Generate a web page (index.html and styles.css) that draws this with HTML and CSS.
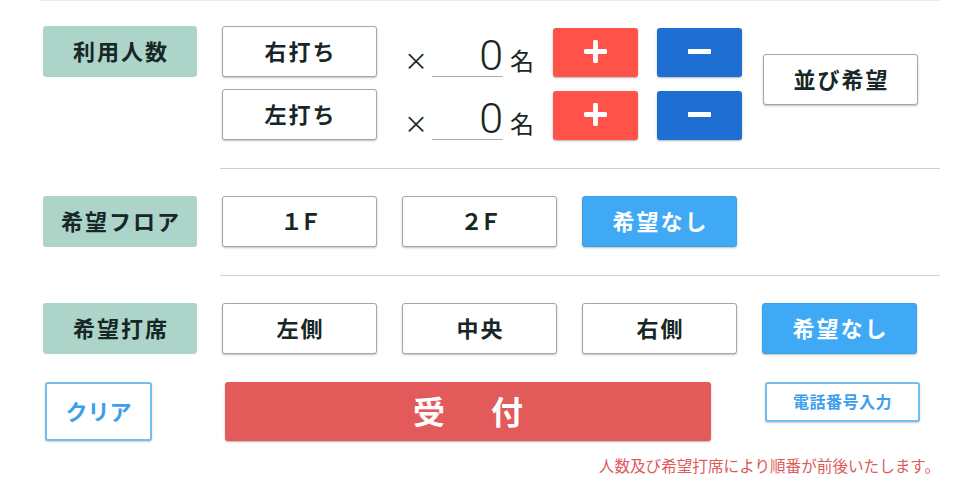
FILE: index.html
```html
<!DOCTYPE html>
<html lang="ja">
<head>
    <meta charset="UTF-8">
    <title>受付</title>
    <link rel="stylesheet" href="styles.css">
</head>
<body>
    <div class="panel">
        <section class="section">
            <div class="section__label">利用人数</div>
            <div class="count">
                <div class="count__row">
                    <button class="choice" type="button">右打ち</button>
                    <div class="count__field">
                        <span class="count__times">×</span>
                        <span class="count__value">0</span>
                        <span class="count__unit">名</span>
                    </div>
                    <button class="step step--plus" type="button">
                        <svg viewBox="0 0 24 24"><path d="M2 12H22M12 2V22"/></svg>
                    </button>
                    <button class="step step--minus" type="button">
                        <svg viewBox="0 0 24 24"><path d="M1 12H23"/></svg>
                    </button>
                </div>
                <div class="count__row">
                    <button class="choice" type="button">左打ち</button>
                    <div class="count__field">
                        <span class="count__times">×</span>
                        <span class="count__value">0</span>
                        <span class="count__unit">名</span>
                    </div>
                    <button class="step step--plus" type="button">
                        <svg viewBox="0 0 24 24"><path d="M2 12H22M12 2V22"/></svg>
                    </button>
                    <button class="step step--minus" type="button">
                        <svg viewBox="0 0 24 24"><path d="M1 12H23"/></svg>
                    </button>
                </div>
            </div>
            <button class="choice choice--queue" type="button">並び希望</button>
        </section>

        <hr class="rule">

        <section class="section">
            <div class="section__label">希望フロア</div>
            <div class="choices">
                <button class="choice choice--floor" type="button">１Ｆ</button>
                <button class="choice choice--floor" type="button">２Ｆ</button>
                <button class="choice choice--on" type="button">希望なし</button>
            </div>
        </section>

        <hr class="rule">

        <section class="section">
            <div class="section__label">希望打席</div>
            <div class="choices">
                <button class="choice" type="button">左側</button>
                <button class="choice" type="button">中央</button>
                <button class="choice" type="button">右側</button>
                <button class="choice choice--on" type="button">希望なし</button>
            </div>
        </section>

        <div class="actions">
            <button class="outline outline--clear" type="button">クリア</button>
            <button class="submit" type="button">受　付</button>
            <button class="outline outline--phone" type="button">電話番号入力</button>
        </div>
        <p class="note">人数及び希望打席により順番が前後いたします。</p>
    </div>
</body>
</html>
```

FILE: styles.css
```css
* {
    box-sizing: border-box;
}
html, body {
    margin: 0;
    padding: 0;
}
body {
    background: #fff;
    font-family: "Noto Sans CJK JP", sans-serif;
    color: #172626;
}
button {
    font: inherit;
    color: inherit;
    margin: 0;
    padding: 0;
    cursor: pointer;
}
.panel {
    width: 900px;
    margin-left: 40px;
    border-top: 1px solid #ececec;
    padding-top: 25px;
}
.section {
    display: flex;
    align-items: flex-start;
    padding-left: 3px;
}
.section__label {
    width: 154px;
    height: 51px;
    margin-right: 25px;
    background: #acd4c8;
    border-radius: 3px;
    display: flex;
    align-items: center;
    justify-content: center;
    font-size: 22px;
    font-weight: 700;
    letter-spacing: 2px;
    padding: 0 0 4px 2px;
}
.choices {
    display: flex;
    gap: 25px;
}
.choice {
    width: 155px;
    height: 51px;
    background: #fff;
    border: 1px solid #a6a6a6;
    border-radius: 3px;
    box-shadow: 0 1px 2px rgba(0, 0, 0, .25);
    font-size: 22px;
    font-weight: 700;
    letter-spacing: 2px;
    padding: 0 0 4px 2px;
}
.choice--floor {
    letter-spacing: -3px;
    padding-left: 0;
}
.choice--on {
    background: #3fa9f5;
    border-color: #3aa0ea;
    color: #fff;
}
.choice--queue {
    margin-left: 21px;
    margin-top: 28px;
}
.count {
    display: flex;
    flex-direction: column;
    gap: 12px;
}
.count__row {
    display: flex;
    align-items: flex-end;
}
.count__field {
    display: flex;
    align-items: baseline;
    margin-left: 27px;
}
.count__times {
    width: 24px;
    text-align: center;
    font-size: 24px;
}
.count__value {
    width: 71px;
    margin-left: 4px;
    padding-top: 9px;
    line-height: 41px;
    border-bottom: 1px solid #aaa;
    text-align: right;
    font-family: Roboto, sans-serif;
    font-weight: 300;
    font-size: 43px;
}
.count__unit {
    margin-left: 7px;
    font-size: 24px;
}
.step {
    width: 85px;
    height: 49px;
    margin-left: 19px;
    border: none;
    border-radius: 3px;
    box-shadow: 0 1px 2px rgba(0, 0, 0, .3);
    display: flex;
    align-items: center;
    justify-content: center;
    padding-bottom: 2px;
}
.step svg {
    width: 23px;
    height: 23px;
    fill: none;
    stroke: #fff;
    stroke-width: 5;
    stroke-linecap: round;
}
.step--plus {
    background: #ff5248;
}
.step--minus {
    background: #1f6fd3;
}
.rule {
    height: 0;
    border: 0;
    border-top: 1px solid #cfcfcf;
    margin: 28px 0 27px 180px;
}
.actions {
    display: flex;
    align-items: flex-start;
    margin-top: 28px;
    padding-left: 5px;
}
.outline {
    background: #fff;
    border: 2px solid #72bdf0;
    border-radius: 3px;
    box-shadow: 0 1px 2px rgba(0, 0, 0, .2);
    color: #3d9fec;
    font-weight: 700;
    padding-bottom: 3px;
}
.outline--clear {
    width: 107px;
    height: 59px;
    font-size: 22px;
}
.outline--phone {
    width: 155px;
    height: 40px;
    margin-left: 54px;
    font-size: 16px;
    letter-spacing: .5px;
}
.submit {
    width: 486px;
    height: 59px;
    margin-left: 73px;
    background: #e35a5a;
    border: none;
    border-radius: 3px;
    box-shadow: 0 1px 2px rgba(0, 0, 0, .3);
    color: #fff;
    font-size: 32px;
    font-weight: 700;
    letter-spacing: 7px;
    padding: 0 0 4px 7px;
}
.note {
    margin: 13px 0 0;
    text-align: right;
    font-size: 15.6px;
    color: #e05a5a;
}
```
